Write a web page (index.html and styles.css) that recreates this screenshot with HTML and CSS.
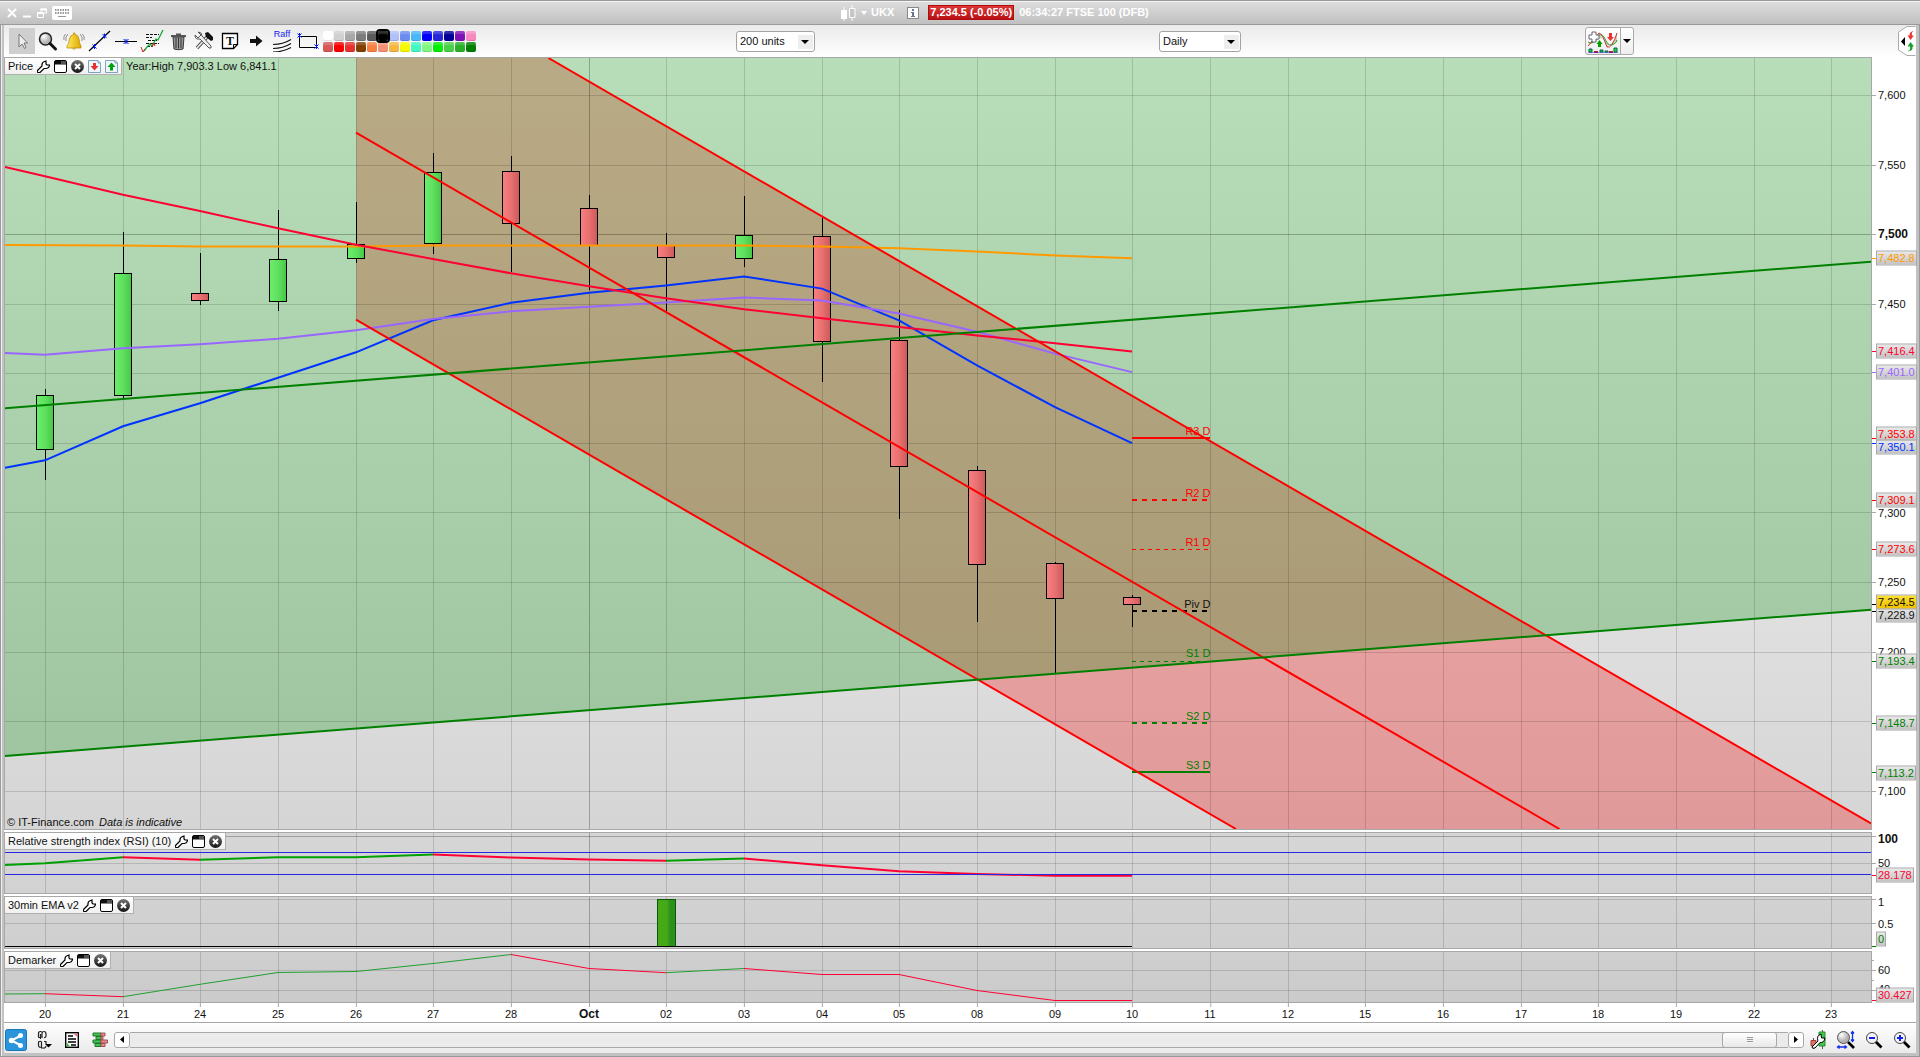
FILE: index.html
```html
<!DOCTYPE html>
<html lang="en">
<head>
<meta charset="utf-8">
<title>UKX - FTSE 100 (DFB)</title>
<link rel="stylesheet" href="styles.css">
</head>
<body>
<svg class="defs" aria-hidden="true">
  <defs>
    <linearGradient id="up"><stop offset="0" stop-color="#6bf06b"/><stop offset=".5" stop-color="#5fe05f"/><stop offset="1" stop-color="#46c846"/></linearGradient>
    <linearGradient id="down"><stop offset="0" stop-color="#f88080"/><stop offset=".5" stop-color="#e87070"/><stop offset="1" stop-color="#cc5a5a"/></linearGradient>
    <linearGradient id="bar"><stop offset=".5" stop-color="#46aa18"/><stop offset=".72" stop-color="#2c901c"/></linearGradient>
    <radialGradient id="lens" cx=".35" cy=".3"><stop offset="0" stop-color="#fff"/><stop offset="1" stop-color="#b4b4b4"/></radialGradient>
    <linearGradient id="ball" x2="0" y2="1"><stop offset="0" stop-color="#777"/><stop offset="1" stop-color="#111"/></linearGradient>
    <linearGradient id="gold"><stop offset="0" stop-color="#ffe860"/><stop offset="1" stop-color="#e0a800"/></linearGradient>
    <symbol id="wrench" viewBox="0 0 13 13"><path d="M1 12.5Q-.5 11.500 1 10L5 6Q4.500 2.500 7.500 1.500L9 1V4L10 5H12.500Q12.500 8 9.500 8.500H7L3 12.500Z" fill="#fff" stroke="#000" stroke-width="1.200"/></symbol>
    <symbol id="window" viewBox="0 0 13 13"><rect x=".5" y=".5" width="12" height="12" rx="1.500" fill="#fff" stroke="#000"/><path d="M1 1H12V4.500H1Z" fill="#111"/><path d="M7 1H12V4H7Z" fill="#555"/></symbol>
    <symbol id="close" viewBox="0 0 13 13"><circle cx="6.500" cy="6.500" r="6.500" fill="url(#ball)"/><path d="M4 4L9 9M9 4L4 9" stroke="#fff" stroke-width="2"/></symbol>
    <symbol id="page" viewBox="0 0 13 13"><path d="M.5 .5H10L12.500 3V12.500H.5Z" fill="#eef5fb" stroke="#7fa3bd"/><path d="M10 .5V3H12.500" fill="none" stroke="#7fa3bd"/></symbol>
  </defs>
</svg>

<header class="titlebar">
  <div class="window-controls">
    <button aria-label="Close"><svg width="10" height="10"><path d="M1 1L9 9M9 1L1 9" stroke="#fff" stroke-width="2"/></svg></button>
    <button aria-label="Minimise"><svg width="10" height="10"><path d="M1 8.500H9" stroke="#fff" stroke-width="2"/></svg></button>
    <button aria-label="Restore"><svg width="10" height="10"><path d="M4 5V1H9.500V5H7" fill="none" stroke="#fff"/><path d="M3.500 1.500H9.500" stroke="#fff" stroke-width="2"/><path d="M.5 5H6.500V9.500H.5Z" fill="none" stroke="#fff"/><path d="M.5 5H6.500" stroke="#fff" stroke-width="2"/></svg></button>
    <button aria-label="Keyboard"><svg width="20" height="14"><rect width="20" height="14" rx="2" fill="#fff"/><path d="M3 4H17M3 7H17" stroke="#999" stroke-width="2" stroke-dasharray="1.500 1"/><path d="M6 10.500H14" stroke="#999"/></svg></button>
  </div>
  <div class="instrument">
    <svg class="candles" width="16" height="16"><path d="M4 2V16M12 0V16" stroke="#fff"/><path d="M1 5H7V14H1Z" fill="#fff"/><path d="M9.500 3.500H15V12.500H9.500Z" fill="#c6c6c6" stroke="#fff"/></svg>
    <span class="drop"></span>
    <span class="code">UKX</span>
    <svg class="info" width="12" height="12"><rect x=".5" y=".5" width="11" height="11" fill="#fff" stroke="#888"/><path d="M5 2H7V4H5ZM4 5H7V9H8V10H4V9H5V6H4Z" fill="#6a7490"/></svg>
    <span class="quote">7,234.5 (-0.05%)</span>
    <span class="stamp">06:34:27 FTSE 100 (DFB)</span>
  </div>
</header>

<div class="frame">
<div class="toolbar">
  <div class="tools">
    <button class="active" aria-label="Pointer"><svg width="26" height="26"><path d="M10 6V19L13 16L15.500 20.500L17 19.500L15 15H18.500Z" fill="#eee" stroke="#777"/></svg></button>
    <button aria-label="Zoom"><svg width="26" height="26"><circle cx="10.500" cy="11" r="6" fill="url(#lens)" stroke="#222" stroke-width="1.500"/><path d="M15 15.500L20.500 21" stroke="#111" stroke-width="3" stroke-linecap="round"/></svg></button>
    <button aria-label="Alert"><svg width="26" height="26"><path d="M6 18Q8 16 8.500 11Q9 7 12.500 6.500V5H14V6.500Q17.500 7 18 11Q18.500 16 20 18V20H6Z" fill="url(#gold)" stroke="#b08800" stroke-width=".7"/><path d="M11 20.500Q13 22.500 15 20.500" fill="#b08800"/><path d="M7 6Q4 9 5 13M4.500 6Q2 9 3 12M19 6Q22 9 21 13M21.500 6Q24 9 23 12" fill="none" stroke="#777" stroke-width=".8"/></svg></button>
    <button aria-label="Trend line"><svg width="26" height="26"><path d="M2 23L23 3" stroke="#000" stroke-width="1.200"/><path d="M5.500 16.500L9.500 20.500M9.500 16.500L5.500 20.500M15.500 6L19.500 10M19.500 6L15.500 10M7.500 16V21M17.500 5.500V10.500" stroke="#0018f0"/></svg></button>
    <button aria-label="Horizontal line"><svg width="26" height="26"><path d="M2 13.500H24" stroke="#000"/><path d="M10.500 11L15.500 16M15.500 11L10.500 16M13 11V16" stroke="#0018f0"/></svg></button>
    <button aria-label="Pattern"><svg width="26" height="26"><path d="M7 6.500H20M7 9.500H13M9 12.500H18M7 15.500H20M8 18.500H14" stroke="#111" stroke-width="1.200" stroke-dasharray="3 1"/><path d="M5 23L8 19L11 16L13 18L17 11L19 12L24 2" fill="none" stroke="#12a838" stroke-width="1.300"/><path d="M2 19L4 24L6 21M13 19L15 15L16 18" fill="none" stroke="#e02020"/></svg></button>
    <button aria-label="Delete"><svg width="26" height="26"><path d="M8 9H19L18 21Q13.500 22.500 9 21Z" fill="#999" stroke="#333"/><path d="M6 7H21V9H6ZM11 5.500H16V7H11Z" fill="#555"/><path d="M11 10V20M13.500 10V20.500M16 10V20" stroke="#333"/></svg></button>
    <button aria-label="Settings"><svg width="26" height="26"><path d="M6 20L16 9" stroke="#555" stroke-width="3.500"/><path d="M6 20L16 9" stroke="#eee" stroke-width="1.500"/><path d="M14 5L17 4L22 9V12L20 13L15 9Z" fill="#111"/><path d="M4 7L7 10L10 7L7 4Q11 4 11 8L20 18Q21 21 18 20L9 11Q4 12 4 7Z" fill="#eee" stroke="#555"/></svg></button>
    <button aria-label="Text"><svg width="26" height="26"><path d="M5.500 5.500H20.500V16.500L16.500 20.500H5.500Z" fill="#fff" stroke="#000" stroke-width="1.300"/><path d="M16.500 20.500V16.500H20.500" fill="none" stroke="#000"/></svg><span class="glyph">T</span></button>
    <button aria-label="Arrow"><svg width="26" height="26"><path d="M7 11H13V7.500L19.500 13L13 18.500V15H7Z" fill="#111"/></svg></button>
    <button class="raff" aria-label="Raff channel"><span>Raff</span><svg width="26" height="13"><path d="M4 5.500Q14 5.500 22 .5M4 9.500Q14 9.500 22 4.500M4 13Q14 13 22 8.500" fill="none" stroke="#111" stroke-width="1.200"/></svg></button>
    <button aria-label="Rectangle"><svg width="26" height="26"><path d="M4.500 8.500H21.500V19.500H4.500Z" fill="none" stroke="#000"/><path d="M2.500 5.500L6.500 9.500M6.500 5.500L2.500 9.500M4.500 5V10M19.500 16.500L23.500 20.500M23.500 16.500L19.500 20.500M21.500 16V21" stroke="#0018f0"/></svg></button>
    <div class="palette">
      <button aria-label="White" style="background-color:#fff"></button><button aria-label="Silver" style="background-color:#d0d0d0"></button><button aria-label="Grey" style="background-color:#a8a8a8"></button><button aria-label="Mid grey" style="background-color:#7c7c7c"></button><button aria-label="Dark grey" style="background-color:#5a5a5a"></button><button class="picked" aria-label="Black" style="background-color:#000"></button><button aria-label="Pale blue" style="background-color:#b0c0f8"></button><button aria-label="Light blue" style="background-color:#6c8cf0"></button><button aria-label="Sky" style="background-color:#48b8f8"></button><button aria-label="Blue" style="background-color:#0000f8"></button><button aria-label="Royal blue" style="background-color:#2828d8"></button><button aria-label="Navy" style="background-color:#000098"></button><button aria-label="Purple" style="background-color:#8010b8"></button><button aria-label="Pink" style="background-color:#f888c0"></button>
      <button aria-label="Rose" style="background-color:#d85858"></button><button aria-label="Red" style="background-color:#f80000"></button><button aria-label="Brick" style="background-color:#e83030"></button><button aria-label="Brown" style="background-color:#804000"></button><button aria-label="Orange" style="background-color:#f88040"></button><button aria-label="Salmon" style="background-color:#f89078"></button><button aria-label="Amber" style="background-color:#f8b840"></button><button aria-label="Yellow" style="background-color:#f8f800"></button><button aria-label="Turquoise" style="background-color:#40f8c0"></button><button aria-label="Mint" style="background-color:#80f880"></button><button aria-label="Lime" style="background-color:#00f000"></button><button aria-label="Light green" style="background-color:#48d048"></button><button aria-label="Mid green" style="background-color:#28b028"></button><button aria-label="Green" style="background-color:#008000"></button>
    </div>
  </div>
  <div class="slot"><div class="picker units"><select aria-label="Number of units"><option>200 units</option></select></div></div>
  <div class="slot"><div class="picker period"><select aria-label="Time frame"><option>Daily</option></select></div></div>
  <div class="slot ends">
    <div class="indicators">
      <button aria-label="Add indicator"><svg width="32" height="24"><path d="M2 15Q8 12 12 5Q16 8 20 17Q26 16 30 4V12Q22 18 19 13Q16 7 12 10Q6 16 2 15Z" fill="#bcd8b4"/><path d="M1 13Q5 17 12 6Q16 4 19 12Q22 18 27 15Q30 13 30 11" fill="none" stroke="#22a022"/><path d="M1 17Q6 11 12 4Q15 4 20 18Q25 20 30 4" fill="none" stroke="#d03030"/><path d="M5 3H9V6H12V10H9V13H5V10H2V6H5Z" fill="#fff" stroke="#667"/><path d="M22 4H25V8H27L23.500 12L20 8H22Z" fill="#f03030"/><path d="M11 18V15H9.500L12.500 11L15.500 15H14V18Z" fill="#00a000"/><path d="M2 20H5V23H2ZM13 21H16V23H13ZM18 22H21V23H18ZM27 19H30V23H27Z" fill="#1ae01a" stroke="#065"/><path d="M7 22H11V24H7ZM22 22H26V24H22Z" fill="#c02020"/><path d="M1 24H31" stroke="#2020d0"/></svg></button>
      <button class="more" aria-label="More indicators"><span class="drop dark"></span></button>
    </div>
    <button class="trade" aria-label="Open trading panel"><svg width="18" height="30"><path d="M17.500 .5H9L.5 6V24L9 29.500H17.500" fill="#fff" stroke="#aaa"/><path d="M7 11V20L3 15.500Z" fill="#000"/><path d="M17 5Q13 5 14 9.500H16L12.500 14L9.500 9.500H11.500Q11 5 17 5Z" fill="#e83838"/><path d="M9 25Q13 25 12 20.500H9.500L12.500 16L16 20.500H14.500Q15 26 9 25Z" fill="#18a028"/></svg></button>
  </div>
</div>

<main class="charts">
  <section class="pane price" aria-label="Price chart">
    <svg class="plot" viewBox="5 58 1866 771" preserveAspectRatio="none">
      <path d="M356 58H548.400L1871 823V829H1236L356 319.700Z" fill="#f00" fill-opacity=".28"/>
      <path d="M5 58H1871V609.700L5 756Z" fill="#009004" fill-opacity=".264"/>
      <path class="grid" d="M5 95.500H1871M5 165.500H1871M5 304.500H1871M5 373.500H1871M5 443.500H1871M5 512.500H1871M5 582.500H1871M5 652.500H1871M5 721.500H1871M5 791.500H1871M45.500 58V829M123.500 58V829M200.500 58V829M278.500 58V829M356.500 58V829M433.500 58V829M511.500 58V829M666.500 58V829M744.500 58V829M822.500 58V829M899.500 58V829M977.500 58V829M1055.500 58V829M1132.500 58V829M1210.500 58V829M1288.500 58V829M1365.500 58V829M1443.500 58V829M1521.500 58V829M1598.500 58V829M1676.500 58V829M1754.500 58V829M1831.500 58V829"/>
      <path class="grid strong" d="M5 234.500H1871M589.500 58V829"/>
      <path class="wick" d="M45.500 389V480M123.500 232V398M200.500 253V305M278.500 210V311M356.500 202V263M433.500 153V254M511.500 156V272M589.500 195V290M666.500 233V311M744.500 196V267M822.500 218V382M899.500 310V519M977.500 466V622M1055.500 562V674M1132.500 595V627"/>
      <g class="bull">
        <rect x="36.500" y="395.500" width="17" height="54"/><rect x="114.500" y="273.500" width="17" height="122"/><rect x="269.500" y="259.500" width="17" height="42"/><rect x="347.500" y="244.500" width="17" height="14"/><rect x="424.500" y="172.500" width="17" height="71"/><rect x="735.500" y="235.500" width="17" height="23"/>
      </g>
      <g class="bear">
        <rect x="191.500" y="293.500" width="17" height="7"/><rect x="502.500" y="171.500" width="17" height="52"/><rect x="580.500" y="208.500" width="17" height="37"/><rect x="657.500" y="245.500" width="17" height="12"/><rect x="813.500" y="236.500" width="17" height="105"/><rect x="890.500" y="340.500" width="17" height="126"/><rect x="968.500" y="470.500" width="17" height="94"/><rect x="1046.500" y="563.500" width="17" height="35"/><rect x="1123.500" y="597.500" width="17" height="7"/>
      </g>
      <g class="lines">
        <path stroke="#0033ff" d="M5 467.700L45 460.300L123 426.300L200 403.300L278 377.700L356 352.300L433 320.300L511 302.700L589 292.700L666 285.400L744 276.400L822 288.600L899 320.400L977 365.400L1055 407.100L1132 443.200"/>
        <path stroke="#9966ff" d="M5 353L45 354.700L123 348.300L200 344.300L278 338.700L356 330.300L433 319L511 311.300L589 306.700L666 302.500L744 297.500L822 300.400L899 313.600L977 331.800L1055 353.600L1132 372.100"/>
        <path stroke="#ff9900" d="M5 245L123 245.600L200 246.500H356L433 245.600H744L822 246.400L899 248.200L977 251.400L1055 255.400L1132 258.200"/>
        <path stroke="#ff0033" d="M5 167L45 176.300L123 194.700L200 211L278 228.300L356 244.700L433 259L511 273.300L589 286.300L666 298.200L744 309.300L822 318.200L899 327.100L977 335.400L1055 343.200L1132 351.400"/>
        <path stroke="#f00" d="M1132 438H1210"/><path stroke="#f00" stroke-dasharray="5 5" d="M1132 500H1210"/><path class="thin" stroke="#f00" stroke-dasharray="4 4" d="M1132 549.500H1210"/>
        <path stroke="#000" stroke-dasharray="5 5" d="M1132 611H1210"/>
        <path class="thin" stroke="#008000" stroke-dasharray="4 4" d="M1132 661.500H1210"/><path stroke="#008000" stroke-dasharray="5 5" d="M1132 723H1210"/><path stroke="#008000" d="M1132 772H1210"/>
        <path stroke="#f00" d="M548.400 58L1871 823.500M356 132.700L1559.500 829M356 319.700L1236 829"/>
        <path stroke="#008000" d="M5 408.300L1871 261.700M5 756L1871 609.700"/>
      </g>
    </svg>
    <span class="level r" style="--v:7353.8">R3 D</span><span class="level r" style="--v:7309.1">R2 D</span><span class="level r" style="--v:7273.6">R1 D</span><span class="level" style="--v:7228.9">Piv D</span><span class="level s" style="--v:7193.4">S1 D</span><span class="level s" style="--v:7148.7">S2 D</span><span class="level s" style="--v:7113.2">S3 D</span>
    <div class="head">
      <div class="caption"><span>Price</span>
        <button aria-label="Configure"><svg><use href="#wrench"/></svg></button><button aria-label="Maximise"><svg><use href="#window"/></svg></button><button aria-label="Remove"><svg><use href="#close"/></svg></button><button aria-label="Sell"><svg><use href="#page"/><path d="M5 3H8V6H10.500L6.500 10.500L2.500 6H5Z" fill="#e83030"/></svg></button><button aria-label="Buy"><svg><use href="#page"/><path d="M5 10.500H8V7H10.500L6.500 2.500L2.500 7H5Z" fill="#00a010"/></svg></button>
      </div>
      <span class="range">Year:High 7,903.3 Low 6,841.1</span>
    </div>
    <p class="credit">© IT-Finance.com <i>Data is indicative</i></p>
  </section>
  <div class="scale price-scale">
    <svg class="ticks" viewBox="0 57 4 773" preserveAspectRatio="none"><path stroke="#aaa" d="M0 95.500H4M0 165.500H4M0 234.500H4M0 304.500H4M0 512.500H4M0 582.500H4M0 652.500H4M0 791.500H4"/><path stroke="#f90" d="M0 258.500H4"/><path stroke="#f03" d="M0 351.500H4"/><path stroke="#96f" d="M0 372.500H4"/><path stroke="#f00" d="M0 438.500H4M0 500.500H4M0 549.500H4"/><path stroke="#03f" d="M0 443.500H4"/><path stroke="#000" d="M0 604.500H4M0 611.500H4"/><path stroke="#008000" d="M0 661.500H4M0 723.500H4M0 772.500H4"/></svg>
    <span class="num" style="--v:7600">7,600</span><span class="num" style="--v:7550">7,550</span><span class="num major" style="--v:7500">7,500</span><span class="num" style="--v:7450">7,450</span><span class="num" style="--v:7300">7,300</span><span class="num" style="--v:7250">7,250</span><span class="num" style="--v:7200">7,200</span><span class="num" style="--v:7100">7,100</span>
    <span class="tag slow" style="--v:7482.8">7,482.8</span><span class="tag mid" style="--v:7416.4">7,416.4</span><span class="tag soft" style="--v:7401.0">7,401.0</span><span class="tag res" style="--v:7356.300">7,353.8</span><span class="tag fast" style="--v:7346.800">7,350.1</span><span class="tag res" style="--v:7309.1">7,309.1</span><span class="tag res" style="--v:7273.6">7,273.6</span><span class="tag" style="--v:7226.500">7,228.9</span><span class="tag last" style="--v:7236">7,234.5</span><span class="tag sup" style="--v:7193.4">7,193.4</span><span class="tag sup" style="--v:7148.7">7,148.7</span><span class="tag sup" style="--v:7113.2">7,113.2</span>
  </div>

  <section class="pane rsi" aria-label="Relative strength index">
    <svg class="plot" viewBox="5 833 1866 60" preserveAspectRatio="none">
      <path class="grid" d="M5 863.500H1871M45.500 833V893M123.500 833V893M200.500 833V893M278.500 833V893M356.500 833V893M433.500 833V893M511.500 833V893M666.500 833V893M744.500 833V893M822.500 833V893M899.500 833V893M977.500 833V893M1055.500 833V893M1132.500 833V893M1210.500 833V893M1288.500 833V893M1365.500 833V893M1443.500 833V893M1521.500 833V893M1598.500 833V893M1676.500 833V893M1754.500 833V893M1831.500 833V893"/>
      <path class="grid strong" d="M5 836.500H1871M589.500 833V893"/>
      <g class="lines"><path stroke="#00a000" d="M5 865L45 863.300L123 857.300M200 859.700L278 857.300H356L433 854.500M666 860.700L744 858.500"/><path stroke="#ff0033" d="M123 857.300L200 859.700M433 854.500L511 857.500L589 859.500L666 860.700M744 858.500L822 865.300L899 871.300L977 874L1055 875.700H1132"/><path class="thin" stroke="#2828e0" d="M5 852.500H1871M5 874.500H1871"/></g>
    </svg>
    <div class="head"><div class="caption"><span>Relative strength index (RSI) (10)</span><button aria-label="Configure"><svg><use href="#wrench"/></svg></button><button aria-label="Maximise"><svg><use href="#window"/></svg></button><button aria-label="Remove"><svg><use href="#close"/></svg></button></div></div>
  </section>
  <div class="scale">
    <svg class="ticks" viewBox="0 832 4 62" preserveAspectRatio="none"><path stroke="#aaa" d="M0 836.500H4M0 863.500H4"/><path stroke="#f03" d="M0 875.500H4"/></svg>
    <span class="num major" style="top:11%">100</span><span class="num" style="top:50%">50</span><span class="tag mid" style="top:70%">28.178</span>
  </div>

  <section class="pane ema" aria-label="30min EMA v2">
    <svg class="plot" viewBox="5 897 1866 51" preserveAspectRatio="none">
      <path class="grid" d="M5 899.500H1871M5 923.500H1871M45.500 897V948M123.500 897V948M200.500 897V948M278.500 897V948M356.500 897V948M433.500 897V948M511.500 897V948M666.500 897V948M744.500 897V948M822.500 897V948M899.500 897V948M977.500 897V948M1055.500 897V948M1132.500 897V948M1210.500 897V948M1288.500 897V948M1365.500 897V948M1443.500 897V948M1521.500 897V948M1598.500 897V948M1676.500 897V948M1754.500 897V948M1831.500 897V948"/>
      <path class="grid strong" d="M589.500 897V948"/>
      <rect x="657.500" y="899.500" width="18" height="47" fill="url(#bar)" stroke="#0a5a0a"/><path class="wick" d="M5 946.500H1132"/>
    </svg>
    <div class="head"><div class="caption"><span>30min EMA v2</span><button aria-label="Configure"><svg><use href="#wrench"/></svg></button><button aria-label="Maximise"><svg><use href="#window"/></svg></button><button aria-label="Remove"><svg><use href="#close"/></svg></button></div></div>
  </section>
  <div class="scale">
    <svg class="ticks" viewBox="0 896 4 53" preserveAspectRatio="none"><path stroke="#aaa" d="M0 899.500H4M0 923.500H4"/><path stroke="#008000" d="M0 946.500H4"/></svg>
    <span class="num" style="top:11%">1</span><span class="num" style="top:52%">0.5</span><span class="tag sup" style="top:82%">0</span>
  </div>

  <section class="pane dem" aria-label="Demarker">
    <svg class="plot" viewBox="5 952 1866 50" preserveAspectRatio="none">
      <path class="grid" d="M5 970.500H1871M5 990.500H1871M45.500 952V1002M123.500 952V1002M200.500 952V1002M278.500 952V1002M356.500 952V1002M433.500 952V1002M511.500 952V1002M666.500 952V1002M744.500 952V1002M822.500 952V1002M899.500 952V1002M977.500 952V1002M1055.500 952V1002M1132.500 952V1002M1210.500 952V1002M1288.500 952V1002M1365.500 952V1002M1443.500 952V1002M1521.500 952V1002M1598.500 952V1002M1676.500 952V1002M1754.500 952V1002M1831.500 952V1002"/>
      <path class="grid strong" d="M589.500 952V1002"/>
      <g class="lines"><path class="thin" stroke="#20a030" d="M5 994L45 993.700M123 996.700L200 984.300L278 972.500L356 971.500L433 963.500L511 954.500M666 972.700L744 968.500"/><path class="thin" stroke="#ff0033" d="M45 993.700L123 996.700M511 954.500L589 968.500L666 972.700M744 968.500L822 974.500H899L977 990.500L1055 1000.500H1132"/></g>
    </svg>
    <div class="head"><div class="caption"><span>Demarker</span><button aria-label="Configure"><svg><use href="#wrench"/></svg></button><button aria-label="Maximise"><svg><use href="#window"/></svg></button><button aria-label="Remove"><svg><use href="#close"/></svg></button></div></div>
  </section>
  <div class="scale">
    <svg class="ticks" viewBox="0 951 4 52" preserveAspectRatio="none"><path stroke="#aaa" d="M0 960.500H2M0 970.500H4M0 980.500H2M0 990.500H4"/><path stroke="#f03" d="M0 1000.500H4"/></svg>
    <span class="num" style="top:36%">60</span><span class="num" style="top:74%">40</span><span class="tag mid" style="top:84%">30.427</span>
  </div>

  <div class="dates">
    <span style="--x:45">20</span><span style="--x:123">21</span><span style="--x:200">24</span><span style="--x:278">25</span><span style="--x:356">26</span><span style="--x:433">27</span><span style="--x:511">28</span><span class="major" style="--x:589">Oct</span><span style="--x:666">02</span><span style="--x:744">03</span><span style="--x:822">04</span><span style="--x:899">05</span><span style="--x:977">08</span><span style="--x:1055">09</span><span style="--x:1132">10</span><span style="--x:1210">11</span><span style="--x:1288">12</span><span style="--x:1365">15</span><span style="--x:1443">16</span><span style="--x:1521">17</span><span style="--x:1598">18</span><span style="--x:1676">19</span><span style="--x:1754">22</span><span style="--x:1831">23</span>
  </div>
</main>

<footer class="bottombar">
  <div class="group left">
    <button class="share" aria-label="Share"><svg width="22" height="22"><rect x=".5" y=".5" width="21" height="21" rx="2" fill="#2b95dc" stroke="#1277bb"/><path d="M16 6.500L6.500 11.500L16 16.500" fill="none" stroke="#fff" stroke-width="2"/><circle cx="15.500" cy="6.500" r="2.500" fill="#fff"/><circle cx="6.500" cy="11.500" r="2.700" fill="#fff"/><circle cx="15.500" cy="16.500" r="2.500" fill="#fff"/></svg></button>
    <button aria-label="Link charts"><svg width="16" height="20"><path d="M2.500 7.500V3.500Q2.500 1.500 4.500 1.500T6 3.500V8M6 3Q6.500 1.500 8 1.500Q10 1.500 10 4V6Q9.500 8 8 7.500M2.500 7.500H4.500M4.500 4V9M2.500 12Q4.500 10.500 5.500 12V17Q2.500 18 2.500 15ZM8 11.500H10V14M10 16Q9.500 18.500 7 18H5" fill="none" stroke="#222" stroke-width="1.200"/><path d="M9 14H16L12.500 17.500Z" fill="#000"/></svg></button>
    <button aria-label="Notes"><svg width="14" height="16"><rect x=".7" y=".7" width="12.600" height="14.600" fill="#fff" stroke="#000" stroke-width="1.400"/><path d="M3 4H8M3 7H11M3 10H11M6 13H11" stroke="#000" stroke-width="1.400"/><path d="M8 1.500H12.500V5Z" fill="#e87880"/><path d="M1.500 10L5 14.500H1.500Z" fill="#40b040"/></svg></button>
    <button aria-label="Order book"><svg width="16" height="16"><path d="M1 1H9V4H1ZM4 4.500H9V7.500H4ZM1 8H9V11H1ZM3 11.500H9V14.500H3Z" fill="#3cc850" stroke="#267030"/><path d="M9 1H13V4H9ZM9 4.500H11V7.500H9ZM9 8H15.500V11H9ZM9 11.500H13V14.500H9Z" fill="#e88890" stroke="#a05050"/></svg></button>
  </div>
  <div class="scroller">
    <button class="step" aria-label="Scroll left"><svg width="6" height="7"><path d="M5 0V7L1 3.500Z"/></svg></button>
    <div class="track"><div class="thumb"></div></div>
    <button class="step" aria-label="Scroll right"><svg width="6" height="7"><path d="M1 0V7L5 3.500Z"/></svg></button>
  </div>
  <div class="group">
    <button aria-label="Chart settings"><svg width="16" height="19"><path d="M3.500 8V19M12.500 0V19" stroke="#555"/><path d="M1 10.500H6V16H1Z" fill="#e07060" stroke="#a04040"/><path d="M9 2H15V16H9Z" fill="#40c850" stroke="#268a30"/><path d="M2 17L8 11Q6 6 11 4L11.500 8H15Q14 13 10 12.500L5 18Q2 19 2 17Z" fill="#fff" stroke="#000"/></svg></button>
    <button aria-label="Zoom to fit"><svg width="20" height="20"><path d="M12 12L18 18" stroke="#000" stroke-width="2.600"/><circle cx="7.500" cy="7.500" r="6" fill="url(#lens)" stroke="#555"/><path d="M16.500 2V11M15 3.500L16.500 1.500L18 3.500M15 9.500L16.500 11.500L18 9.500M2 17H10M3.500 15.500L1.500 17L3.500 18.500M8.500 15.500L10.500 17L8.500 18.500" fill="none" stroke="#1030f0" stroke-width="1.300"/></svg></button>
    <button aria-label="Zoom out"><svg width="18" height="18"><path d="M10.500 10.500L16.500 16.500" stroke="#000" stroke-width="2.800"/><circle cx="7" cy="7" r="5.500" fill="#f4f4f4" stroke="#444"/><path d="M4 7H10" stroke="#1020f0" stroke-width="2"/></svg></button>
    <button aria-label="Zoom in"><svg width="18" height="18"><path d="M10.500 10.500L16.500 16.500" stroke="#000" stroke-width="2.800"/><circle cx="7" cy="7" r="5.500" fill="#f4f4f4" stroke="#444"/><path d="M4 7H10M7 4V10" stroke="#1020f0" stroke-width="2"/></svg></button>
  </div>
</footer>
</div>
</body>
</html>
```
FILE: styles.css
```css
* { box-sizing: border-box; }

body {
  margin: 0;
  min-height: 100vh;
  display: flex;
  flex-direction: column;
  font: 11px/13px "Liberation Sans", Arial, sans-serif;
  color: #111;
  background: #fff;
}

button {
  margin: 0;
  padding: 0;
  border: 0;
  background: none;
  font: inherit;
  color: inherit;
}

svg { display: block; }
.defs { position: absolute; width: 0; height: 0; }

/* title bar */
.titlebar {
  display: grid;
  grid-template-columns: 840fr 1080fr;
  align-items: center;
  height: 25px;
  border-top: 1px solid #999;
  border-bottom: 1px solid #999;
  box-shadow: inset 0 1px #f4f4f4;
  background: linear-gradient(#dedede, #c0c0c0);
  color: #fff;
  font-weight: bold;
}
.window-controls { display: flex; align-items: center; gap: 5px; padding-left: 7px; }
.instrument { display: flex; align-items: center; white-space: nowrap; }
.drop {
  width: 0;
  height: 0;
  border: 3px solid transparent;
  border-top: 4px solid #fff;
  border-bottom: 0;
}
.drop.dark { border-top-color: #000; border-left-width: 4px; border-right-width: 4px; }
.instrument .drop { margin-left: 5px; }
.code { margin-left: 4px; }
.info { margin-left: 13px; }
.quote {
  margin-left: 9px;
  padding: 0 1px;
  border: 1px solid #b00c10;
  background: linear-gradient(#dc3838, #b81014);
}
.stamp { margin-left: 5px; }

/* window frame */
.frame {
  flex: 1;
  display: flex;
  flex-direction: column;
  border: solid #999;
  border-width: 0 1px 1px;
  padding: 0 3px 3px;
  background: #c2c2c2;
  box-shadow: inset 1px 0 #f0f0f0;
}

/* toolbar */
.toolbar {
  display: grid;
  grid-template-columns: 732fr 423fr 426fr 331fr;
  align-items: center;
  height: 32px;
  background: linear-gradient(#eaeaea, #fff);
}
.tools { display: flex; align-items: center; padding-left: 5px; }
.tools > button { position: relative; flex: none; width: 26px; height: 26px; }
.tools > .active { background: #cfcfcf; }
.glyph {
  position: absolute;
  inset: 6px 0 0;
  font: bold 12px/14px "Liberation Serif", serif;
  text-align: center;
}
.raff span { display: block; height: 9px; font-size: 9px; line-height: 9px; color: #1020f0; }
.palette {
  display: grid;
  grid-template-columns: repeat(14, 10px);
  gap: 1px;
  margin-left: 2px;
}
.palette button {
  height: 10px;
  border-radius: 2px;
  box-shadow: inset 0 3px 1px rgba(255, 255, 255, .18), inset 0 -1px rgba(0, 0, 0, .12);
}
.palette .picked { outline: 2px solid #000; z-index: 1; }
.picker { position: relative; }
.picker.units { width: 79px; }
.picker.period { width: 82px; }
.picker select {
  appearance: none;
  width: 100%;
  height: 21px;
  padding: 0 3px;
  border: 1px solid #a4a4a4;
  border-radius: 3px;
  background: #fff;
  color: #111;
  font: inherit;
}
.picker::before {
  content: "";
  position: absolute;
  right: 2px;
  top: 4px;
  width: 15px;
  height: 14px;
  background: #eee;
}
.picker::after {
  content: "";
  position: absolute;
  right: 6px;
  top: 9px;
  border: 4px solid transparent;
  border-top-color: #000;
  border-bottom: 0;
}
.picker::before, .picker::after { pointer-events: none; }
.ends { display: flex; justify-content: space-between; align-items: center; }
.indicators {
  display: flex;
  height: 28px;
  border: 1px solid #aaa;
  border-radius: 3px;
  background: linear-gradient(#fff, #eee);
}
.indicators button { padding: 1px; }
.indicators .more {
  display: flex;
  align-items: center;
  padding: 0 2px;
  border-left: 1px solid #aaa;
}

/* charts */
.charts {
  flex: 1;
  display: grid;
  grid-template-columns: 1fr 44px;
  grid-template-rows: minmax(400px, 1fr) 62px 53px 52px 18px;
  row-gap: 2px;
  background: #fff;
}
.pane { position: relative; border: 1px solid #a8a8a8; min-width: 0; overflow: hidden; }
.price { background: linear-gradient(#fafafa, #d5d5d5); }
.rsi { background: linear-gradient(#d6d6d6, #d2d2d2); }
.ema { background: linear-gradient(#d2d2d2, #cfcfcf); }
.dem { background: linear-gradient(#cfcfcf, #cbcbcb); }
.plot, .ticks { position: absolute; left: 0; top: 0; height: 100%; }
.plot { width: 100%; }
.ticks { width: 4px; }
.grid { stroke: #000; stroke-opacity: .14; }
.grid.strong { stroke-opacity: .26; }
.wick { stroke: #000; }
.bull rect { fill: url(#up); stroke: #000; }
.bear rect { fill: url(#down); stroke: #000; }
.lines path { fill: none; stroke-width: 2; }
.lines .thin { stroke-width: 1; }

.head { position: relative; display: flex; align-items: center; }
.caption {
  display: flex;
  align-items: center;
  gap: 4px;
  height: 17px;
  padding: 0 3px;
  border: solid #b0b0b0;
  border-width: 0 1px 1px 0;
  background: linear-gradient(#fff, #f0f0f0);
  white-space: nowrap;
}
.caption svg { width: 13px; height: 13px; }
.range { margin-left: 4px; }
.credit { position: absolute; left: 2px; bottom: 0; margin: 0; }
.credit i { margin-left: 2px; }

.level, .price-scale span { top: calc((7627.3 - var(--v)) / 555.3 * 100%); }
.level { position: absolute; right: 35.4%; transform: translateY(-100%); }
.r { color: #f00; }
.s { color: #008000; }

.scale { position: relative; }
.scale span { position: absolute; transform: translateY(-50%); }
.num { left: 6px; }
.major { font-size: 12px; font-weight: bold; }
.tag {
  left: 4px;
  padding: 0 1px;
  border: 1px solid #a8a8a8;
  background: linear-gradient(#e8e8e8, #c4c4c4);
}
.tag.slow { color: #f90; }
.tag.mid { color: #f03; }
.tag.soft { color: #96f; }
.tag.fast { color: #03f; }
.tag.res { color: #f00; }
.tag.sup { color: #008000; }
.tag.last { background: linear-gradient(#ffe030, #f0c000); }

.dates {
  position: relative;
  grid-column: 1 / -1;
  margin-top: -2px;
  border-bottom: 1px solid #a8a8a8;
}
.dates span {
  position: absolute;
  top: 0;
  left: calc((var(--x) - 4) / 1912 * 100%);
  padding-top: 5px;
  transform: translateX(-50%);
}
.dates span::before {
  content: "";
  position: absolute;
  left: 50%;
  top: 0;
  width: 1px;
  height: 4px;
  background: #a8a8a8;
}

/* bottom bar */
.bottombar {
  display: flex;
  align-items: center;
  height: 30px;
  padding-top: 3px;
  background: linear-gradient(#fff, #eaeaea);
}
.group { display: flex; align-items: center; }
.group button { width: 28px; display: flex; justify-content: center; }
.group .share { width: 24px; margin-right: 2px; }
.scroller { flex: 1; display: flex; }
.step {
  display: flex;
  align-items: center;
  justify-content: center;
  width: 16px;
  height: 16px;
  border: 1px solid #a8a8a8;
  border-radius: 3px;
  background: #fff;
}
.track {
  flex: 1;
  display: flex;
  justify-content: flex-end;
  padding-right: 11px;
  border: solid #a8a8a8;
  border-width: 1px 0;
  background: #ebebeb;
}
.thumb {
  width: 55px;
  margin: -1px 0;
  border: 1px solid #a8a8a8;
  border-radius: 3px;
  background: linear-gradient(#999 1px, transparent 1px, transparent 2px, #999 2px, #999 3px, transparent 3px, transparent 4px, #999 4px) center / 6px 5px no-repeat, linear-gradient(#fff, #e8e8e8);
}
```
